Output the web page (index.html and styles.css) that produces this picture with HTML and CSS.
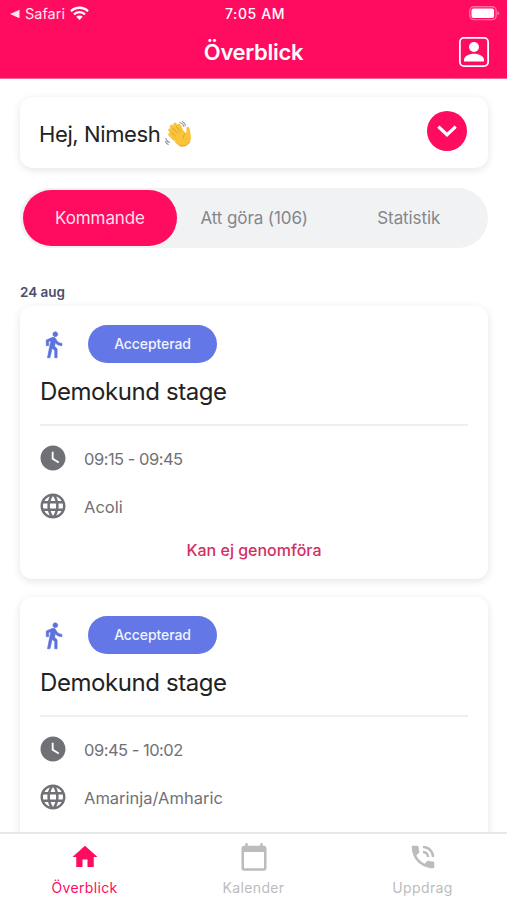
FILE: index.html
```html
<!DOCTYPE html>
<html lang="sv">
<head>
<meta charset="utf-8">
<title>Överblick</title>
<link rel="stylesheet" href="styles.css">
</head>
<body>
<svg class="defs" width="0" height="0">
  <symbol id="walk" viewBox="0 0 24 24"><path d="M13.5 5.5c1.1 0 2-.9 2-2s-.9-2-2-2-2 .9-2 2 .9 2 2 2zM9.8 8.9L7 23h2.1l1.800-8 2.100 2v6h2v-7.500l-2.100-2 .6-3C14.800 12 16.800 13 19 13v-2c-1.900 0-3.500-1-4.300-2.400l-1-1.600c-.4-.6-1-1-1.700-1-.3 0-.5.1-.8.1L6 8.300V13h2V9.600l1.800-.7" stroke="currentColor" stroke-width=".5"/></symbol>
  <symbol id="clock" viewBox="0 0 24 24"><path d="M12 2C6.5 2 2 6.5 2 12s4.5 10 10 10 10-4.5 10-10S17.5 2 12 2zm4.2 14.2L11 13V7h1.500v5.200l4.500 2.700-.8 1.300z"/></symbol>
  <symbol id="globe" viewBox="0 0 24 24"><path d="M11.99 2C6.47 2 2 6.48 2 12s4.47 10 9.99 10C17.52 22 22 17.52 22 12S17.52 2 11.99 2zm6.93 6h-2.95c-.32-1.25-.78-2.45-1.38-3.56 1.84.63 3.37 1.91 4.33 3.56zM12 4.04c.83 1.2 1.48 2.53 1.91 3.96h-3.82c.43-1.43 1.08-2.76 1.91-3.96zM4.26 14C4.1 13.36 4 12.69 4 12s.1-1.36.26-2h3.38c-.08.66-.14 1.32-.14 2s.06 1.34.14 2H4.26zm.82 2h2.95c.32 1.25.78 2.45 1.38 3.56-1.84-.63-3.37-1.9-4.33-3.56zm2.95-8H5.08c.96-1.66 2.49-2.93 4.33-3.56C8.81 5.55 8.35 6.75 8.03 8zM12 19.96c-.83-1.2-1.48-2.53-1.91-3.96h3.82c-.43 1.43-1.08 2.76-1.91 3.96zM14.34 14H9.66c-.09-.66-.16-1.32-.16-2s.07-1.35.16-2h4.68c.09.65.16 1.32.16 2s-.07 1.34-.16 2zm.25 5.56c.6-1.11 1.06-2.31 1.38-3.56h2.95c-.96 1.65-2.49 2.93-4.33 3.56zM16.36 14c.08-.66.14-1.32.14-2s-.06-1.34-.14-2h3.38c.16.64.26 1.31.26 2s-.1 1.36-.26 2h-3.38z"/></symbol>
</svg>
<div class="app">
  <header class="header">
    <div class="status">
      <div class="back">
        <svg width="10" height="10" viewBox="0 0 10 10"><path d="M0 5L9.5.8v8.4z"/></svg>
        <span class="back-label">Safari</span>
        <svg class="wifi" width="19" height="15" viewBox="0 0 19 15"><path d="M1 5.2a12.200 12.200 0 0 1 17 0M4 8.300a8 8 0 0 1 11 0" fill="none" stroke="#fff" stroke-width="2.300"/><path d="M9.500 14L6.300 10.800a4.600 4.600 0 0 1 6.400 0z"/></svg>
      </div>
      <span class="time">7:05 AM</span>
      <svg class="battery" width="31" height="15" viewBox="0 0 31 15"><rect x=".8" y=".8" width="26.400" height="12.800" rx="4" fill="none" stroke="#ff6c9f" stroke-width="1.400"/><rect x="2.500" y="2.500" width="22.600" height="9.400" rx="2"/><path d="M28.600 5v4.400q1.500-.8 1.500-2.200t-1.500-2.200" fill="#ff83ae"/></svg>
    </div>
    <div class="titlebar">
      <h1 class="title">Överblick</h1>
      <svg class="profile" width="30" height="30" viewBox="0 0 30 30"><rect x=".9" y=".9" width="28.200" height="28.200" rx="4" fill="none" stroke="#fff" stroke-width="1.800"/><circle cx="15" cy="10" r="5"/><path d="M5 24.500v-1.700c0-3.600 5-6.100 10-6.100s10 2.500 10 6.100v1.700z"/></svg>
    </div>
  </header>
  <main class="content">
    <section class="greeting">
      <span class="hello">Hej, Nimesh</span>
      <svg class="wave" width="27" height="27" viewBox="0 0 27 27">
        <g fill="none" stroke="#f9c33c" stroke-width="3.600" stroke-linecap="round"><path d="M12 15L5 9.200M13 13L6.500 5.500M15 11.500L10 3.500M17 11.500L14 4.500M9 17.500L5 13.500"/></g>
        <path d="M7 15.500L17.500 8.500l3.100 3.800q1.200-1 .9-3.300c-.3-2 .2-3.100 1.500-3.200 1.600 0 1.700 2.200 2.100 4.600.6 3.700 2 8.100-1.100 11.600-3.600 4-9 4.300-12.700.8z" fill="#f9c33c"/>
        <path d="M13 12.500L7.500 7M15.300 10.800L11 5M10.500 15L6 11M20.600 12.300c-2 1-2.700 3-2.100 5.200" fill="none" stroke="#d89425" stroke-width=".7"/>
        <path d="M14 24.500c4 1.400 8.300.3 10.800-3.700" fill="none" stroke="#e59b27" stroke-width="1"/>
        <path d="M15 1.500q3 1 4 4M17.500.8q2.500 1.300 3 3.700M.8 17.500q.8 3 3.700 4M.5 20.500q.7 2 2.700 3" fill="none" stroke="#979ca6" stroke-width="1.200" stroke-linecap="round"/>
      </svg>
      <span class="expand"><svg width="40" height="40" viewBox="0 0 40 40"><path d="M12.500 16.700l7.500 7 7.500-7" fill="none" stroke="#fff" stroke-width="3.200" stroke-linecap="square"/></svg></span>
    </section>
    <nav class="tabs">
      <span class="tab tab-active">Kommande</span>
      <span class="tab">Att göra (106)</span>
      <span class="tab">Statistik</span>
    </nav>
    <h2 class="date">24 aug</h2>
    <article class="card">
      <div class="card-top"><svg class="walk" width="29" height="29"><use href="#walk"/></svg><span class="badge">Accepterad</span></div>
      <h3 class="name">Demokund stage</h3>
      <div class="row row-time"><svg width="30" height="30"><use href="#clock"/></svg><span class="hours">09:15 - 09:45</span></div>
      <div class="row"><svg width="30" height="30"><use href="#globe"/></svg><span class="lang">Acoli</span></div>
      <div class="decline"><span>Kan ej genomföra</span></div>
    </article>
    <article class="card">
      <div class="card-top"><svg class="walk" width="29" height="29"><use href="#walk"/></svg><span class="badge">Accepterad</span></div>
      <h3 class="name">Demokund stage</h3>
      <div class="row row-time"><svg width="30" height="30"><use href="#clock"/></svg><span class="hours">09:45 - 10:02</span></div>
      <div class="row"><svg width="30" height="30"><use href="#globe"/></svg><span class="lang">Amarinja/Amharic</span></div>
    </article>
  </main>
  <footer class="bottom">
    <div class="item item-active"><svg width="30" height="30" viewBox="0 0 24 24"><path d="M10 20v-6h4v6h5v-8h3L12 3 2 12h3v8z"/></svg><span>Överblick</span></div>
    <div class="item"><svg width="30" height="30" viewBox="0 0 24 24"><path d="M20 3h-1V1h-2v2H7V1H5v2H4c-1.100 0-2 .9-2 2v16c0 1.100.9 2 2 2h16c1.100 0 2-.9 2-2V5c0-1.100-.9-2-2-2zm0 18H4V8h16v13z"/></svg><span>Kalender</span></div>
    <div class="item"><svg width="30" height="30" viewBox="0 0 24 24"><path d="M20 15.500c-1.250 0-2.450-.2-3.570-.57a1.020 1.020 0 0 0-1.020.24l-2.200 2.200a15.045 15.045 0 0 1-6.590-6.590l2.200-2.210a.96.96 0 0 0 .25-1A11.360 11.360 0 0 1 8.500 4c0-.55-.45-1-1-1H4c-.55 0-1 .45-1 1 0 9.390 7.610 17 17 17 .55 0 1-.45 1-1v-3.500c0-.55-.45-1-1-1zM19 12h2a9 9 0 0 0-9-9v2c3.870 0 7 3.130 7 7zm-4 0h2c0-2.760-2.240-5-5-5v2c1.660 0 3 1.340 3 3z"/></svg><span>Uppdrag</span></div>
  </footer>
</div>
</body>
</html>
```
FILE: styles.css
```css
* { box-sizing: border-box; }
body { margin: 0; font-family: Inter, "Liberation Sans", sans-serif; background: #fff; }
h1, h2, h3 { margin: 0; }
svg { display: block; flex: none; fill: currentColor; }
span { white-space: nowrap; }
.defs { position: absolute; }
.app { width: 507px; height: 900px; display: flex; flex-direction: column; overflow: hidden; }
.header { flex: none; height: 79px; background: #ff0b60; color: #fff; border-bottom: 1px solid #f5659a; }
.status { display: grid; grid-template-columns: 1fr auto 1fr; align-items: center; height: 27px; padding: 0 7px 0 10px; }
.back { display: flex; align-items: center; gap: 5px; color: #ffe3ed; }
.back-label { font-size: 14.500px; letter-spacing: 0; }
.wifi { color: #fff; }
.time { font-size: 14px; font-weight: 500; letter-spacing: .6px; }
.battery { justify-self: end; color: #fff; }
.titlebar { display: grid; grid-template-columns: 1fr auto 1fr; align-items: center; height: 50px; padding: 0 18px; }
.title { grid-column: 2; font-size: 22px; line-height: 28px; font-weight: 600; letter-spacing: -.3px; }
.profile { justify-self: end; }
.content { flex: 1; min-height: 0; overflow: hidden; padding: 18px 19px 0 20px; }
.greeting { display: flex; align-items: center; height: 71px; padding: 0 21px 0 19px; border-radius: 13px; box-shadow: 0 2px 9px rgba(0,0,0,.11); color: #222; }
.hello { font-size: 22px; line-height: 28px; margin-top: 3px; letter-spacing: -.4px; }
.wave { margin: 3px 0 0 5px; }
.expand { margin: -4px 0 0 auto; width: 40px; height: 40px; border-radius: 50%; background: #ff0b60; }
.tabs { display: grid; grid-template-columns: 154px 1fr 1fr; align-items: center; height: 60px; margin-top: 20px; padding: 2px 2px 2px 3px; border-radius: 30px; background: #f0f2f4; }
.tab { text-align: center; font-size: 17px; line-height: 56px; letter-spacing: -.1px; color: #85868a; }
.tab-active { background: #ff0b60; color: #ffdfea; border-radius: 28px; }
.date { margin-top: 34px; height: 24px; font-size: 13.500px; line-height: 20px; font-weight: 600; color: #4a4f6b; }
.card { height: 273px; margin-bottom: 18px; padding: 19px 20px 0; border-radius: 12px; box-shadow: 0 2px 9px rgba(0,0,0,.11); color: #707176; }
.card-top { display: flex; align-items: center; }
.walk { color: #5c72dc; margin-left: -1px; }
.badge { margin-left: 20px; width: 129px; height: 38px; border-radius: 19px; background: #6377e6; color: #f1f3ff; text-align: center; font-size: 14px; font-weight: 500; letter-spacing: -.1px; line-height: 38px; }
.name { height: 63px; padding-top: 12px; border-bottom: 2px solid #efeff1; font-size: 24px; line-height: 33px; font-weight: 400; letter-spacing: -.42px; color: #222; }
.row { display: flex; align-items: center; gap: 16px; height: 48px; margin-left: -2.500px; font-size: 16.500px; line-height: 22px; }
.row span { margin: 1px 0 0 .5px; }
.row-time { margin-top: 8px; }
.hours { letter-spacing: -.5px; }
.lang { letter-spacing: 0; }
.decline { text-align: center; color: #d32f63; font-size: 16px; font-weight: 500; line-height: 22px; margin-top: 9px; }
.bottom { flex: none; height: 68px; display: grid; grid-template-columns: repeat(3, 1fr); border-top: 2px solid #e7e7e8; padding-top: 8px; background: #fff; }
.item { display: flex; flex-direction: column; align-items: center; color: #bcbcbe; font-size: 14px; line-height: 20px; letter-spacing: .35px; }
.item span { margin-top: 6px; }
.item-active { color: #ff0b60; }
```
